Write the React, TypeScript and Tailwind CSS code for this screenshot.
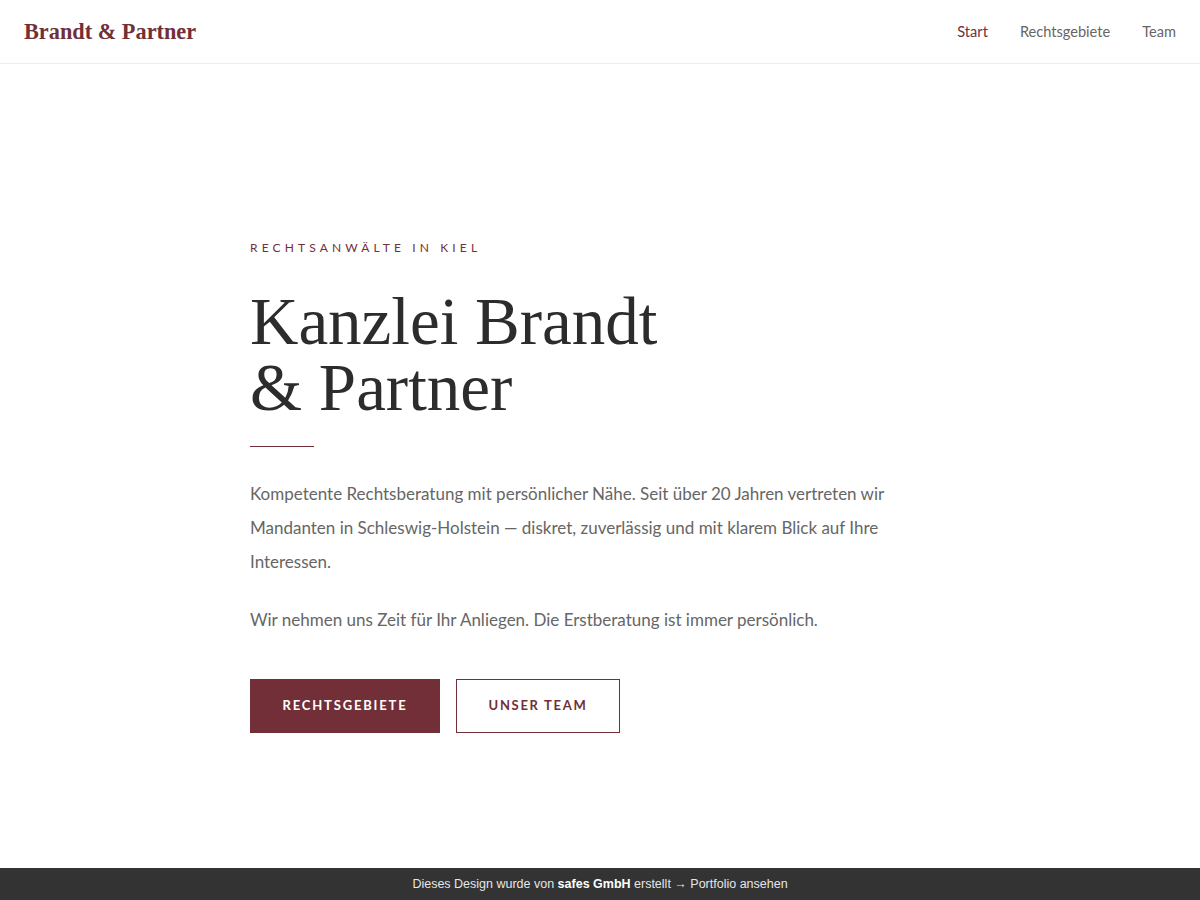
import React from "react";

export default function App() {
  return (
    <div className="flex h-[900px] flex-col bg-white" style={{ fontFamily: "Lato, 'Noto Sans', sans-serif" }}>
      <header className="flex h-16 shrink-0 items-center justify-between border-b border-[#ececec] px-6">
        <div className="text-[22.3px] font-bold text-[#722f37]" style={{ fontFamily: "'Liberation Serif', serif" }}>
          Brandt &amp; Partner
        </div>
        <nav className="flex items-center gap-8 text-[14.6px]">
          <a className="text-[#722f37]">Start</a>
          <a className="text-[#666666]">Rechtsgebiete</a>
          <a className="text-[#666666]">Team</a>
        </nav>
      </header>
      <main className="flex-1 pt-[176px]">
        <div className="mx-auto w-[700px]">
          <div className="text-[12px] leading-4 tracking-[0.345em] text-[#722f37]">RECHTSANWÄLTE IN KIEL</div>
          <h1
            className="mt-[32px] text-[67px] font-normal leading-[66px] text-[#2c2c2c]"
            style={{ fontFamily: "'Liberation Serif', serif" }}
          >
            Kanzlei Brandt
            <br />
            &amp; Partner
          </h1>
          <div className="mt-[26px] h-px w-16 bg-[#722f37]" />
          <div className="mt-[30px] w-[648px] text-[17px] leading-[34px] text-[#666666]">
            <p>
              Kompetente Rechtsberatung mit persönlicher Nähe. Seit über 20 Jahren vertreten wir Mandanten in
              Schleswig-Holstein — diskret, zuverlässig und mit klarem Blick auf Ihre Interessen.
            </p>
            <p className="mt-6">Wir nehmen uns Zeit für Ihr Anliegen. Die Erstberatung ist immer persönlich.</p>
          </div>
          <div className="mt-[42px] flex gap-4">
            <a className="flex h-[54px] w-[190px] items-center justify-center bg-[#722f37] text-[13px] font-bold tracking-[0.14em] text-white">
              RECHTSGEBIETE
            </a>
            <a className="flex h-[54px] w-[164px] items-center justify-center border border-[#722f37] text-[13px] font-bold tracking-[0.13em] text-[#722f37]">
              UNSER TEAM
            </a>
          </div>
        </div>
      </main>
      <footer
        className="flex h-8 shrink-0 items-center justify-center bg-[#333333] text-[12.5px] text-[#e6e6e6]"
        style={{ fontFamily: "'Liberation Sans', Arial, sans-serif" }}
      >
        Dieses Design wurde von&nbsp;<span className="font-semibold text-white">safes GmbH</span>&nbsp;erstellt → Portfolio ansehen
      </footer>
    </div>
  );
}
